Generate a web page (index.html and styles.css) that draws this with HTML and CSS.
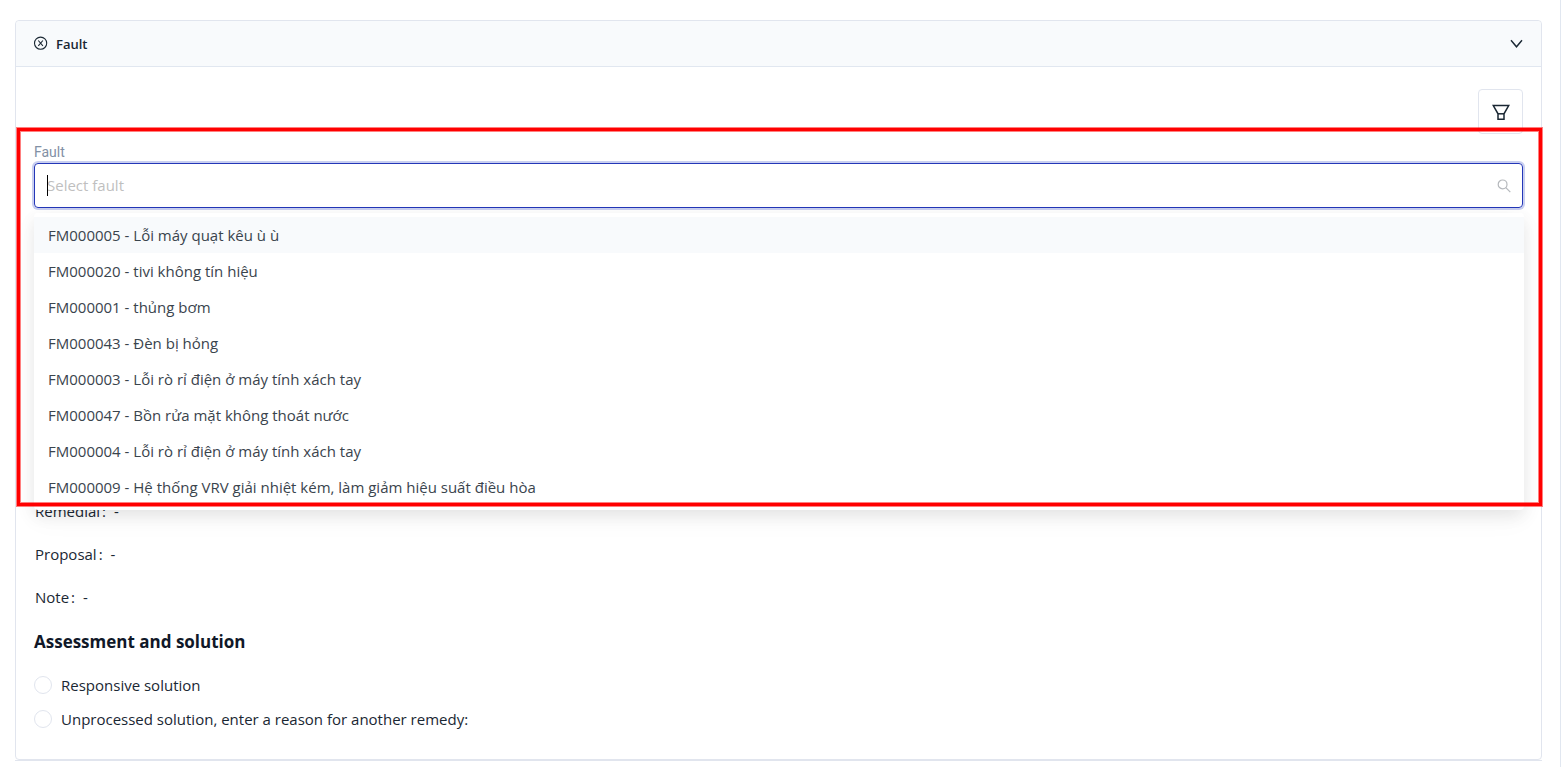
FILE: index.html
```html
<!DOCTYPE html>
<html lang="en">

<head>
  <meta charset="utf-8">
  <meta name="viewport" content="width=device-width, initial-scale=1.0">
  <title>Fault</title>
  <link rel="stylesheet" href="styles.css">
</head>

<body>
  <main class="page">
    <section class="panel">
      <header class="panel-header">
        <svg class="icon-fault" viewBox="0 0 14 14" width="14" height="14" fill="none" stroke="currentColor">
          <circle cx="6.6" cy="6.2" r="6.1" stroke-width="1.1" />
          <path d="M4.3 3.5l4.6 5.4M8.9 3.5L4.3 8.9" stroke-width="1.1" />
        </svg>
        <h2>Fault</h2>
        <button type="button" class="collapse" aria-label="Collapse">
          <svg viewBox="0 0 14 14" width="14" height="14" fill="none" stroke="currentColor" stroke-width="1.4">
            <path d="M2 3.2l5.5 6.6L13 3.2" />
          </svg>
        </button>
      </header>

      <form class="panel-body">
        <div class="toolbar">
          <button type="button" class="filter" aria-label="Filter">
            <svg viewBox="0 0 18 18" width="18" height="18" fill="none" stroke="currentColor" stroke-width="1.5">
              <path d="M1.3 2.5h15.4L12 10.8v5.5H6v-5.5z" />
              <path d="M6 10.8h6" />
            </svg>
          </button>
        </div>

        <div class="field">
          <label for="fault">Fault</label>
          <div class="select">
            <span class="caret"></span>
            <input type="text" id="fault" role="combobox" aria-expanded="true" aria-controls="faultList" placeholder="Select fault">
            <svg viewBox="0 0 14 14" width="14" height="14" fill="none" stroke="currentColor" stroke-width="1.2">
              <circle cx="5.6" cy="5.4" r="4.4" />
              <path d="M8.8 8.6l4.5 4.5" />
            </svg>
          </div>
          <ul class="dropdown" id="faultList" role="listbox">
            <li class="active" role="option">FM000005 - Lỗi máy quạt kêu ù ù</li>
            <li role="option">FM000020 - tivi không tín hiệu</li>
            <li role="option">FM000001 - thủng bơm</li>
            <li role="option">FM000043 - Đèn bị hỏng</li>
            <li role="option">FM000003 - Lỗi rò rỉ điện ở máy tính xách tay</li>
            <li role="option">FM000047 - Bồn rửa mặt không thoát nước</li>
            <li role="option">FM000004 - Lỗi rò rỉ điện ở máy tính xách tay</li>
            <li role="option">FM000009 - Hệ thống VRV giải nhiệt kém, làm giảm hiệu suất điều hòa</li>
          </ul>
        </div>

        <dl class="details">
          <div><dt>Remedial</dt><dd>-</dd></div>
          <div><dt>Proposal</dt><dd>-</dd></div>
          <div><dt>Note</dt><dd>-</dd></div>
        </dl>

        <h3>Assessment and solution</h3>
        <label class="radio"><input type="radio" name="solution" value="responsive">Responsive solution</label>
        <label class="radio"><input type="radio" name="solution" value="unprocessed">Unprocessed solution, enter a reason for another remedy:</label>
      </form>

      <div class="highlight"></div>
    </section>
    <hr>
  </main>
</body>

</html>
```
FILE: styles.css
```css
* {
  box-sizing: border-box;
}

body {
  margin: 0;
  background: #fff;
  color: #1a2733;
  font-family: "Segoe UI", "Open Sans", "Noto Sans", sans-serif;
  font-size: 15px;
  overflow: hidden;
}

button {
  display: flex;
  align-items: center;
  justify-content: center;
  padding: 0;
  background: #fff;
  color: inherit;
  cursor: pointer;
}

.page {
  min-height: 100vh;
  margin-right: 4px;
  padding: 20px 18px 0 15px;
  border-right: 1px solid #e1e7f0;
}

.panel {
  position: relative;
  border: 1px solid #e1e5ee;
  border-radius: 4px;
}

.panel-header {
  display: flex;
  align-items: center;
  gap: 8px;
  height: 46px;
  padding: 0 18px;
  background: #f8fafc;
  border-bottom: 1px solid #e1e7f0;
  border-radius: 4px 4px 0 0;
}

.panel-header h2 {
  flex: 1;
  margin: 0;
  font-size: 13px;
  font-weight: 600;
}

.icon-fault {
  overflow: visible;
}

.collapse {
  border: none;
  background: none;
}

.panel-body {
  padding: 22px 18px 23px;
}

.toolbar {
  display: flex;
  justify-content: flex-end;
}

.filter {
  width: 45px;
  height: 45px;
  border: 1px solid #e1e5ee;
  border-radius: 4px;
}

.field {
  position: relative;
  margin-top: 8px;
}

.field label {
  display: block;
  color: #8290a5;
  font-family: Roboto, sans-serif;
  font-size: 14px;
  line-height: 20px;
}

.select {
  position: relative;
  display: flex;
  align-items: center;
  height: 45px;
  margin-top: 1px;
  padding: 0 11px 0 12px;
  border: 1px solid #2437b8;
  border-radius: 4px;
  box-shadow: 0 0 0 2px #c9cff0;
  color: #b5b8bc;
}

.select input {
  flex: 1;
  height: 100%;
  padding: 0 0 2px;
  border: none;
  outline: none;
  background: none;
  font: inherit;
}

.select input::placeholder {
  color: #bfbfbf;
}

.caret {
  position: absolute;
  left: 12px;
  width: 1px;
  height: 21px;
  background: #000;
}

.dropdown {
  position: absolute;
  top: 100%;
  left: 0;
  right: -1px;
  z-index: 1;
  margin: 5px 0 0;
  padding: 4px 0 5px;
  list-style: none;
  background: #fff;
  border-radius: 4px;
  box-shadow: 0 6px 16px rgba(0, 0, 0, 0.08), 0 9px 28px rgba(0, 0, 0, 0.04);
}

.dropdown li {
  padding: 0 14px;
  line-height: 36px;
  color: #3a444d;
}

.dropdown .active {
  background: #f8fafc;
}

/* room for the open list */
.details {
  margin: 282px 0 0;
}

.details div {
  display: flex;
  padding-left: 1px;
  line-height: 43px;
}

.details dt::after {
  content: ":";
  margin: 0 8px 0 2px;
}

.details dd {
  margin: 0;
}

h3 {
  margin: 0 0 3px;
  color: #101828;
  font-size: 17px;
  font-weight: 700;
  line-height: 46px;
}

.radio {
  display: flex;
  align-items: center;
  gap: 9px;
  height: 34px;
}

.radio input {
  appearance: none;
  width: 18px;
  height: 18px;
  margin: 0;
  border: 1px solid #e1e5ee;
  border-radius: 50%;
}

.highlight {
  position: absolute;
  top: 107px;
  left: 1px;
  right: -1px;
  z-index: 2;
  height: 378px;
  border: 3px solid #f00;
  box-shadow: 0 0 0 1px rgba(255, 0, 0, 0.5), inset 0 0 0 1px rgba(255, 0, 0, 0.5);
  pointer-events: none;
}

hr {
  height: 1px;
  margin: 0;
  border: none;
  background: #e1e5ee;
}
```
